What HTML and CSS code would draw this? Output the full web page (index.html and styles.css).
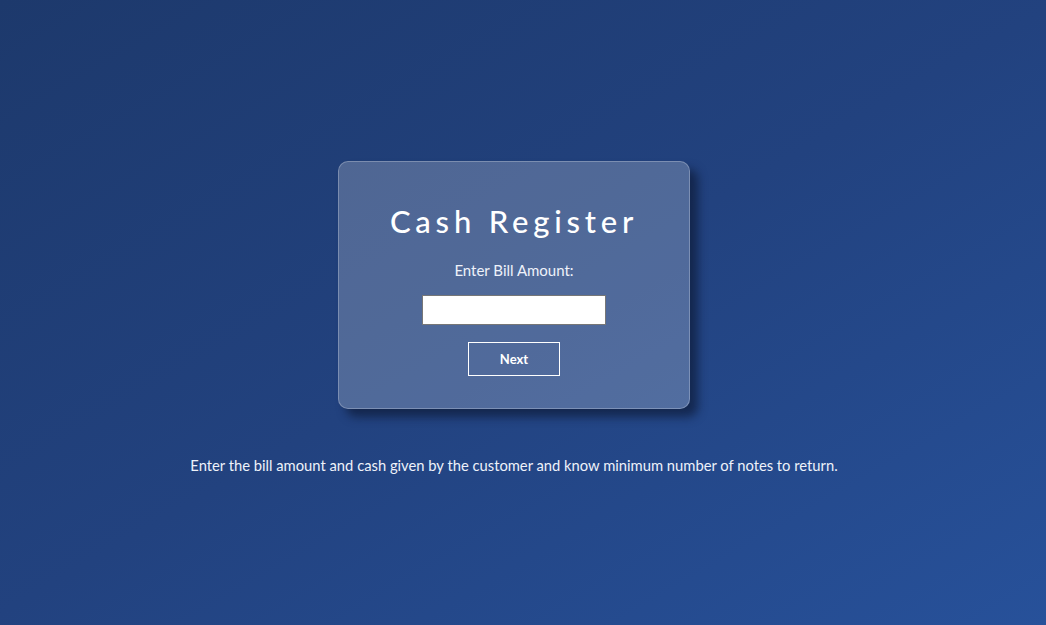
FILE: index.html
```html
<!DOCTYPE html>
<html lang="en">
<head>
<meta charset="utf-8">
<title>Cash Register</title>
<link rel="stylesheet" href="styles.css">
</head>
<body>
<main class="page">
  <section class="card">
    <h1 class="title">Cash Register</h1>
    <label class="label" for="bill">Enter Bill Amount:</label>
    <input class="input" id="bill" type="text">
    <button class="btn" type="button">Next</button>
  </section>
  <p class="info">Enter the bill amount and cash given by the customer and know minimum number of notes to return.</p>
</main>
</body>
</html>
```
FILE: styles.css
```css
* { box-sizing: border-box; }
html, body { height: 100%; }
body {
  margin: 0;
  background: linear-gradient(150deg, #1d396c 0%, #22427f 50%, #27519a 100%);
  font-family: Lato, "Open Sans", sans-serif;
  color: #fff;
}
.page {
  display: flex;
  flex-direction: column;
  align-items: center;
  padding: 161px 18px 0 0;
}
.card {
  width: 352px;
  height: 248px;
  background: rgba(255, 255, 255, 0.21);
  border: 1px solid rgba(255, 255, 255, 0.25);
  border-radius: 10px;
  box-shadow: 8px 8px 10px rgba(10, 20, 45, 0.6);
  display: flex;
  flex-direction: column;
  align-items: center;
  padding-top: 40px;
}
.title {
  margin: 0;
  font-size: 31px;
  font-weight: 500;
  letter-spacing: 4.8px;
  line-height: 38px;
}
.label {
  margin-top: 21px;
  font-size: 15px;
  line-height: 18px;
  color: #eef2fa;
}
.input {
  margin-top: 16px;
  width: 184px;
  height: 30px;
  border: 1px solid #777;
  background: #fff;
}
.btn {
  margin-top: 17px;
  width: 92px;
  height: 34px;
  background: transparent;
  border: 1px solid #fff;
  color: #fff;
  font-family: inherit;
  font-weight: 700;
  font-size: 13px;
}
.info {
  margin: 47px 0 0;
  font-size: 14.75px;
  color: #eef2fa;
}
```
